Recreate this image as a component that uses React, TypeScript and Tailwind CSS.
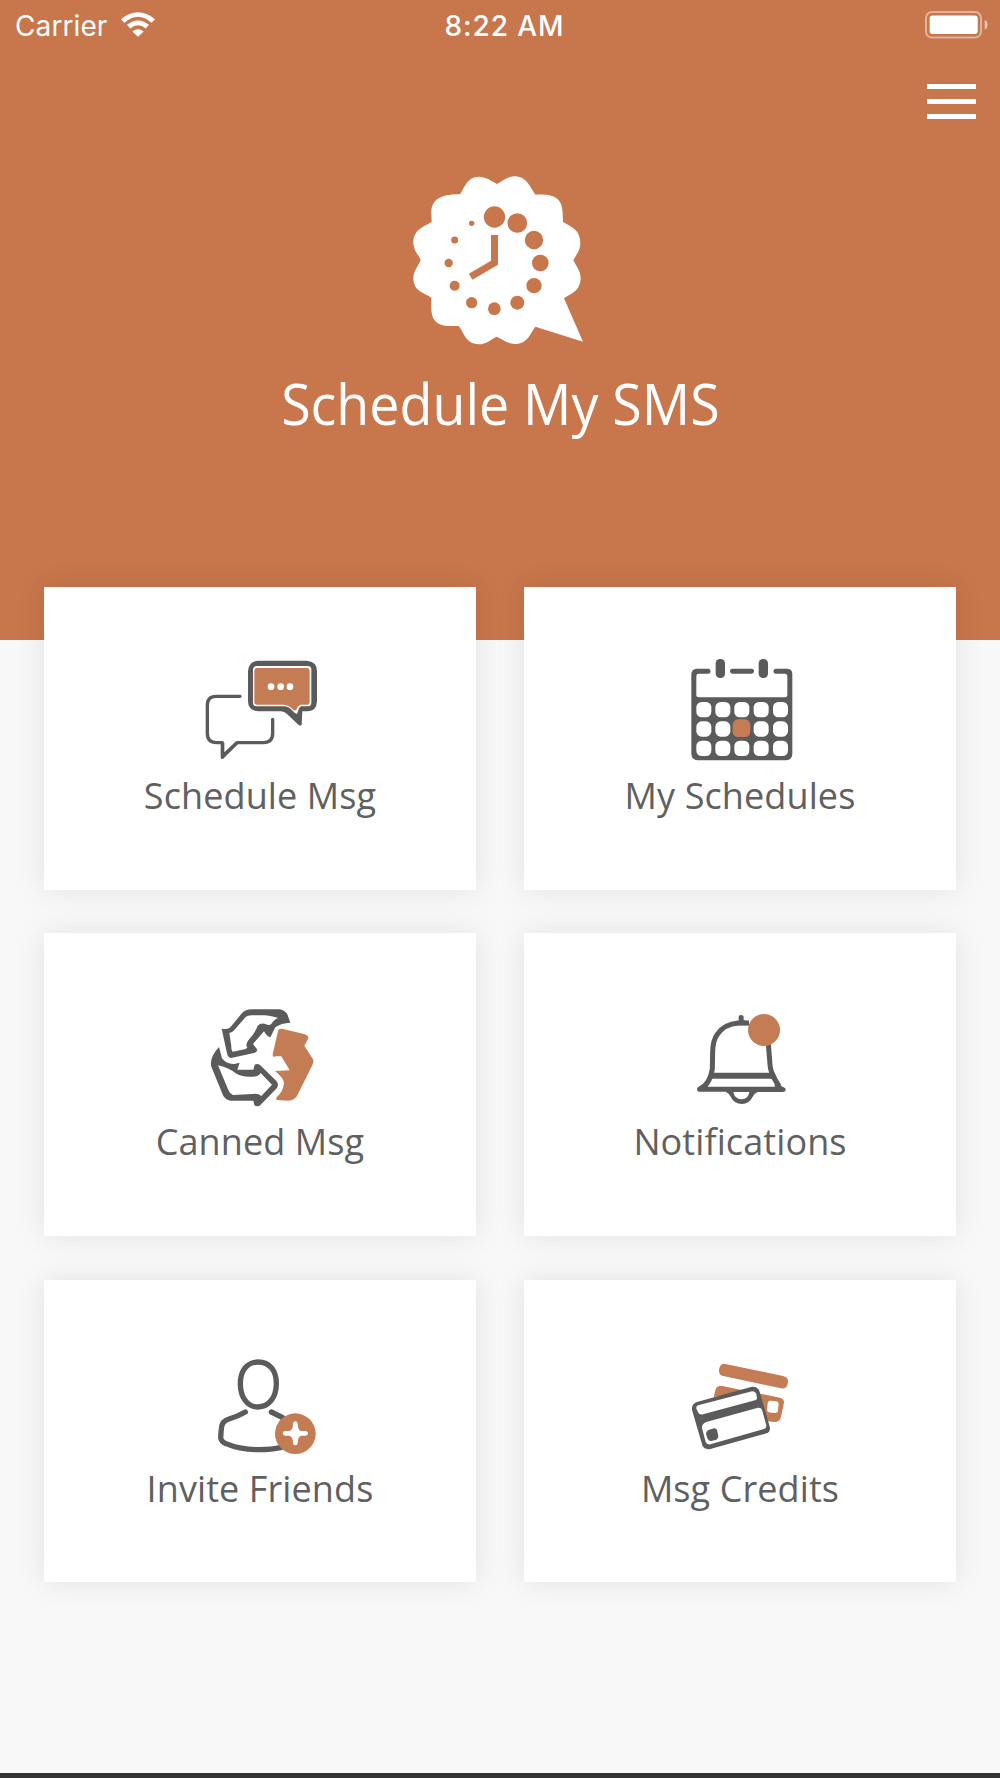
import type { ReactNode } from 'react'

const GRAY = '#5b5b5b'
const ORANGE = '#c47c54'

interface IconProps {
  viewBox: string
  children: ReactNode
}

function TileIcon({ viewBox, children }: IconProps) {
  return (
    <svg viewBox={viewBox} className="h-[120px] w-[120px]" fill="none" strokeLinecap="round" strokeLinejoin="round">
      {children}
    </svg>
  )
}

function ChatIcon() {
  return (
    <TileIcon viewBox="30 21 360 360">
      <path
        d="M150 169H78Q52 169 52 196V280Q52 308 80 308H97V352L141 308H220Q248 308 248 280V238"
        stroke={GRAY}
        strokeWidth="10"
      />
      <path d="M93 308V354Q95 358 100 354L145 311L137 305L103 337V308Z" fill={GRAY} />
      <path
        d="M205 62H350Q381 64 381 94V184Q380 213 353 214H337L335 254Q332 259 326 255L291 222Q283 214 273 214H206Q174 212 174 184V94Q175 64 205 62Z"
        fill={GRAY}
      />
      <path
        d="M200 78H354Q364 79 364 88V190Q363 199 354 199H333Q327 202 325 211L321 222Q316 222 309 214Q296 199 282 199H200Q189 198 189 188V88Q190 79 200 78Z"
        fill="#fff"
      />
      <path
        d="M200 84H352Q359 85 359 92V187Q359 194 352 194H331Q322 199 320 208Q314 216 307 207Q295 195 281 194H200Q193 194 193 187V92Q193 85 200 84Z"
        fill={ORANGE}
      />
      <circle cx="243" cy="140" r="10" fill="#fff" />
      <circle cx="272" cy="140" r="10" fill="#fff" />
      <circle cx="300" cy="140" r="10" fill="#fff" />
    </TileIcon>
  )
}

function CalendarIcon() {
  const cols = [49, 106, 163, 221, 279]
  const rows = [156, 214, 272]
  return (
    <TileIcon viewBox="0 -9 360 360">
      <path
        d="M50 56H84A7 7 0 0 1 84 71H56Q49 71 49 80V136Q49 142 56 142H315Q322 142 322 136V80Q322 71 315 71H288A7 7 0 0 1 288 56H322Q337 57 337 72V312Q336 330 318 331H53Q35 329 34 312V72Q35 57 50 56Z"
        fill={GRAY}
      />
      <rect x="150" y="56" width="72" height="15" rx="7" fill={GRAY} />
      <rect x="107" y="27" width="28" height="57" rx="13" fill={GRAY} />
      <rect x="236" y="27" width="28" height="57" rx="13" fill={GRAY} />
      {rows.map((y) =>
        cols.map((x) =>
          x === 163 && y === 214 ? (
            <rect key={x} x="158" y="208" width="53" height="53" rx="16" fill={ORANGE} />
          ) : (
            <rect key={x} x={x} y={y} width="45" height="46" rx="16" fill="#fff" />
          ),
        ),
      )}
    </TileIcon>
  )
}

function RecycleIcon() {
  return (
    <TileIcon viewBox="0 -21 360 360">
      {/* upper left arrow */}
      <path
        d="M65 86Q84 90 91 82L123 43Q134 28 155 28H238Q253 29 262 43L271 68Q244 69 226 82L211 112Q199 108 192 94L159 132L172 149Q171 157 162 159L93 174Q83 173 81 160Z"
        fill={GRAY}
      />
      <path
        d="M88 99Q96 98 103 90L137 51Q144 45 158 46H194Q221 49 235 54Q222 58 214 72Q208 78 198 73Q184 67 173 77Q166 98 145 121Q135 136 142 143Q139 148 127 149L98 155Q93 151 94 139Z"
        fill="#fff"
      />
      {/* lower left arrow */}
      <path
        d="M57 141L66 175Q81 194 103 192L119 188L112 209H160L164 194Q173 190 180 195L230 244Q237 253 231 264L179 317Q169 322 163 315L160 302H91Q78 300 70 288L34 200Q27 173 57 141Z"
        fill={GRAY}
      />
      <path
        d="M54 196Q84 202 107 220Q125 232 156 230Q175 231 182 219L216 254L184 288Q174 279 157 282L99 285Q89 281 85 270Z"
        fill="#fff"
      />
      {/* right arrow */}
      <path
        d="M235 89Q239 84 249 87L315 103Q326 108 325 115L313 137L340 179Q342 186 337 196L291 288Q282 302 265 302L232 300Q226 298 230 292Q250 274 252 249Q252 235 225 213L269 211L244 169H227Q217 174 218 163Z"
        fill={ORANGE}
      />
    </TileIcon>
  )
}

function BellIcon() {
  return (
    <TileIcon viewBox="-15 -21 360 360">
      <path
        d="M192 69H160Q118 72 97 103Q84 121 83 154L82 207Q77 238 60 258"
        stroke={GRAY}
        strokeWidth="15"
        strokeLinecap="butt"
      />
      <path d="M250 132L254 180Q255 205 260 217Q269 240 283 260" stroke={GRAY} strokeWidth="15" strokeLinecap="butt" />
      <path d="M161 68V50Q161 45 168 45Q176 45 176 50V60L192 66V76H150Z" fill={GRAY} />
      <path d="M82 218H257L268 236H76Z" fill={GRAY} />
      <path
        d="M62 242L75 236Q66 247 69 260H270Q269 245 257 235H266Q277 255 296 262Q303 265 302 271Q301 276 293 276H218Q208 280 202 292Q193 312 171 312Q147 312 138 292Q132 279 122 275H41Q36 274 36 268Q36 262 41 260Q53 255 62 242Z"
        fill={GRAY}
      />
      <path d="M145 276H193Q190 297 170 298Q148 297 145 276Z" fill="#fff" />
      <circle cx="237" cy="90" r="48" fill={ORANGE} />
    </TileIcon>
  )
}

function InviteIcon() {
  return (
    <TileIcon viewBox="0 -30 360 360">
      <path
        d="M174 36C211 36 229 64 229 101C229 140 208 171 174 171C141 171 121 140 121 101C121 64 140 36 174 36Z"
        stroke={GRAY}
        strokeWidth="16"
      />
      <path
        d="M136 186Q114 199 87 207Q65 213 64 236L62 262Q63 275 78 281Q120 299 176 299Q215 299 244 292"
        stroke={GRAY}
        strokeWidth="16"
      />
      <path d="M214 186L248 203" stroke={GRAY} strokeWidth="16" />
      <circle cx="286" cy="251" r="61" fill={ORANGE} />
      <path
        d="M286 214Q293 215 293 221Q293 243 306 243H317Q324 244 324 250Q324 257 317 257H306Q293 258 293 279Q293 286 286 286Q279 286 279 279Q279 258 266 257H255Q248 256 248 250Q248 244 255 243H266Q279 242 279 221Q279 215 286 214Z"
        fill="#fff"
      />
    </TileIcon>
  )
}

function CreditsIcon() {
  return (
    <TileIcon viewBox="0 -30 360 360">
      <path
        d="M132 41L309 78Q325 82 324 94L322 104Q319 117 303 115L130 78Q116 74 117 61Q119 42 132 41Z"
        fill={ORANGE}
      />
      <path
        d="M101 141L107 118Q110 107 123 107L300 143Q313 147 312 158L303 201Q299 216 284 216L263 214L230 130Z"
        fill={ORANGE}
      />
      <rect x="262" y="153" width="33" height="35" rx="9" fill="#fff" transform="rotate(6 278 170)" />
      <path
        d="M51 156L213 111Q233 108 239 125L270 233Q271 245 260 250L91 297Q73 300 67 286L36 180Q34 161 51 156Z"
        fill={GRAY}
      />
      <path d="M54 166L216 124Q226 123 229 132L231 144Q231 149 225 151L69 193Q60 195 56 190L49 176Q47 169 54 166Z" fill="#fff" />
      <path d="M79 216L234 173Q243 172 246 179L259 226Q260 234 252 237L91 283Q80 285 77 276L66 234Q65 221 79 216Z" fill="#fff" />
      <path d="M87 239L103 235Q109 235 111 240L115 258Q115 266 109 269L94 273Q87 274 83 267L78 252Q78 243 87 239Z" fill={GRAY} />
    </TileIcon>
  )
}

const tiles = [
  { label: 'Schedule Msg', icon: <ChatIcon /> },
  { label: 'My Schedules', icon: <CalendarIcon /> },
  { label: 'Canned Msg', icon: <RecycleIcon /> },
  { label: 'Notifications', icon: <BellIcon /> },
  { label: 'Invite Friends', icon: <InviteIcon /> },
  { label: 'Msg Credits', icon: <CreditsIcon /> },
]

// clock dots, clockwise from twelve
const dots = [
  [283.5, 171, 32],
  [352, 189, 29.5],
  [402, 240, 27.5],
  [421, 309, 25],
  [402, 377, 23],
  [352, 428, 21],
  [283, 446, 19],
  [215, 428, 17],
  [164, 377, 15],
  [146, 309, 12.5],
  [164, 240, 10.5],
  [215, 190, 8],
]

function Logo() {
  return (
    <svg viewBox="0 0 600 600" className="h-[200px] w-[200px]">
      <path
        d="M291 72C308 64 320 49 347 49C380 51 390 80 406 104C450 102 487 105 488 160L489 186C520 204 541 212 541 250C540 274 530 281 520 301C530 321 541 330 542 355C540 395 515 399 492 415L549 545L406 500C389 523 383 551 345 552C320 551 310 538 290 530C270 540 260 552 236 553C195 551 192 516 176 498L140 498C105 494 94 475 94 445V413C65 395 42 394 40 355C41 331 53 322 62 300C53 280 41 272 40 248C41 210 65 203 95 186L94 155C96 120 120 102 180 103C195 79 202 51 236 50C262 51 275 64 291 72Z"
        fill="#fff"
      />
      {dots.map(([cx, cy, r]) => (
        <circle key={`${cx}-${cy}`} cx={cx} cy={cy} r={r} fill="#c8764b" />
      ))}
      <path d="M283.5 225V308L212 350" fill="none" stroke="#c8764b" strokeWidth="21" />
    </svg>
  )
}

function StatusBar() {
  return (
    <div className="grid h-[50px] grid-cols-3 items-center pl-[15px] pr-3 text-[28px] leading-none">
      <div className="flex items-center gap-[14px]">
        <span className="pt-[2px] tracking-[0.1px]">Carrier</span>
        <svg viewBox="0 0 102 74" className="mb-[1px] h-[25px] w-[34px]" fill="#fff">
          <path d="M0 21Q51 -20 102 21L92 32Q51 -4 10 32Z" />
          <path d="M18 38Q51 12 84 38L74 49Q51 30 28 49Z" />
          <path d="M34 58Q51 44 68 58L51 74Z" />
        </svg>
      </div>
      <span className="whitespace-nowrap pl-[6px] pt-[2px] text-center font-medium tracking-[0.9px]">8:22 AM</span>
      <svg viewBox="0 0 190 84" className="h-7 w-[63px] justify-self-end" fill="none">
        <rect x="3" y="3" width="166" height="77" rx="18" stroke="#fff" strokeOpacity=".45" strokeWidth="6" />
        <rect x="14" y="13" width="145" height="56" rx="9" fill="#fff" />
        <path d="M180 26Q189 31 189 41Q189 51 180 57Z" fill="#fff" fillOpacity=".6" />
      </svg>
    </div>
  )
}

export default function App() {
  return (
    <div className="flex h-[1778px] w-[1000px] flex-col overflow-hidden border-b-[5px] border-[#333] bg-[#f8f8f8]">
      <header className="flex h-[640px] shrink-0 flex-col bg-[#c8764b] font-['Inter',sans-serif] text-white">
        <StatusBar />
        <div className="flex h-[110px] justify-end pr-6 pt-[34px]">
          <button aria-label="Menu" className="flex h-[35px] w-[49px] flex-col justify-between">
            <span className="h-[5px] w-full bg-white" />
            <span className="h-[5px] w-full bg-white" />
            <span className="h-[5px] w-full bg-white" />
          </button>
        </div>
        <div className="flex flex-col items-center">
          <Logo />
          <h1 className="mt-[7px] origin-center scale-x-[0.96] whitespace-nowrap font-['Open_Sans',sans-serif] text-[56px] leading-[72px]">
            Schedule My SMS
          </h1>
        </div>
      </header>

      <main className="-mt-[53px] grid grid-cols-2 gap-x-12 gap-y-[43.8px] px-11">
        {tiles.map(({ label, icon }) => (
          <button
            key={label}
            className="flex h-[302.6px] flex-col items-center bg-white pt-[60px] shadow-[0_0_28px_rgba(0,0,0,0.09)]"
          >
            {icon}
            <span className="mt-[5px] whitespace-nowrap font-['Open_Sans',sans-serif] text-[36px] leading-[48px] tracking-[0.1px] text-[#606060]">
              {label}
            </span>
          </button>
        ))}
      </main>
    </div>
  )
}
